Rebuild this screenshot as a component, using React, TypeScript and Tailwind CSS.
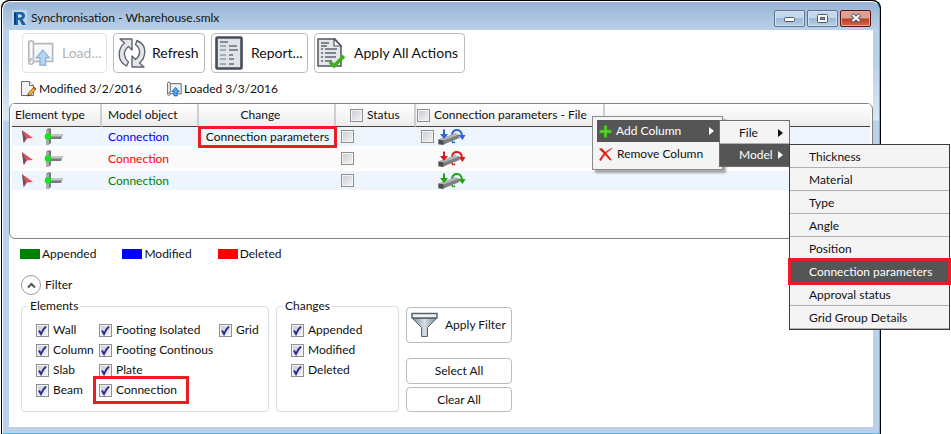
import React, { useId, useState } from "react";

function ScrollIcon({ size, faded }: { size: number; faded?: boolean }) {
  return (
    <svg width={size} height={size} viewBox="0 0 30 30" className={`shrink-0 ${faded ? "opacity-45" : ""}`} aria-hidden="true">
      <path d="M8 5H28.500V24H5" fill="#eef0f2" stroke="#5d6268" strokeWidth="1.8" />
      <path d="M3 25V4Q3 2 5.500 2Q8 2 8 4V21" fill="#f8f8f8" stroke="#5d6268" strokeWidth="1.8" />
      <path d="M3 25Q3 27 5 27Q8 27 8 24Q8 21 5.500 21.500Q4 22 5 24.500" fill="#fff" stroke="#5d6268" strokeWidth="1.6" />
      <path d="M18 12L25 20H21V28H15V20H11Z" fill="#5ba8f0" stroke="#1762b3" strokeWidth="1.6" />
    </svg>
  );
}

function RefreshIcon() {
  return (
    <svg width="28" height="32" viewBox="0 0 28 32" className="shrink-0" aria-hidden="true">
      <g fill="#e3e6e9" stroke="#60656d" strokeWidth="1.4" strokeLinejoin="round">
        <path d="M2 2H14V13L10.500 9.500Q6 13 6.500 18Q7 22 10.500 25L8.500 29Q1 25 1.200 17Q1.500 10 6.500 6Z" />
        <path d="M26 30H14V19L17.500 22.500Q22 19 21.500 14Q21 10 17.500 7.500L19 3.500Q27 7 26.800 15Q26.500 22 21.500 26Z" />
      </g>
    </svg>
  );
}

function ReportIcon() {
  return (
    <svg width="28" height="34" viewBox="0 0 28 34" className="shrink-0" aria-hidden="true">
      <rect x="1.500" y="1.500" width="25" height="31" rx="1" fill="#dfe3e8" stroke="#454d5a" strokeWidth="2.600" />
      <path d="M5 6H13M14 10H22M14 14H23M14 19H18M14 23H19M14 28H19" stroke="#858c96" strokeWidth="2" />
      <path d="M5 10H11M5 14H11M5 19H11M5 23H11M5 28H11" stroke="#a5abb3" strokeWidth="2" />
    </svg>
  );
}

function ApplyActionsIcon() {
  return (
    <svg width="30" height="32" viewBox="0 0 30 32" className="shrink-0" aria-hidden="true">
      <path d="M2 2H19L25 9V29H2Z" fill="#e4e7ea" stroke="#4f5661" strokeWidth="1.500" />
      <path d="M18 2V9H25Z" fill="#fff" stroke="#4f5661" strokeWidth="1.200" />
      <path d="M5 6H13M5 9H11M9 12H21M9 16H20M9 20H20M9 24H16" stroke="#5c636d" strokeWidth="1.300" />
      <path d="M5 12H7M5 16H7M5 20H7M5 24H7" stroke="#5c636d" strokeWidth="1.500" />
      <path d="M14 25L18 29L28 19" fill="none" stroke="#3fae1c" strokeWidth="3.600" />
    </svg>
  );
}

function EditIcon() {
  return (
    <svg width="16" height="16" viewBox="0 0 16 16" className="shrink-0" aria-hidden="true">
      <path d="M.5 .5H8.500L12.500 4.500V14.500H.5Z" fill="#f4f4f4" stroke="#6a6a6a" />
      <path d="M8.500 .5V4.500H12.500" fill="#fff" stroke="#6a6a6a" />
      <path d="M6.500 15L7.500 12L13 6L15 8L9.500 14Z" fill="#f5b32c" stroke="#7d5210" strokeWidth=".8" />
      <path d="M12 7L13.200 5.700L15.400 7.900L14 9Z" fill="#d03a2a" />
      <path d="M6.500 15.500L7.200 13L8.600 14.300Z" fill="#333" />
    </svg>
  );
}

function FunnelIcon() {
  return (
    <svg width="27" height="26" viewBox="0 0 27 26" className="shrink-0" aria-hidden="true">
      <defs>
        <linearGradient id="funnel" x1="0" x2="1">
          <stop offset="0" stopColor="#7d8b96" />
          <stop offset=".5" stopColor="#d5dde2" />
          <stop offset="1" stopColor="#7d8b96" />
        </linearGradient>
      </defs>
      <path d="M1 6L10.500 15.500V24.500H16.500V15.500L26 6Z" fill="url(#funnel)" stroke="#56616b" />
      <path d="M1 1.500H26V6H1Z" fill="#eef3f4" stroke="#56616b" strokeWidth="1.400" />
    </svg>
  );
}

function LogoIcon() {
  return (
    <svg width="15" height="16" viewBox="0 0 15 16" className="shrink-0" aria-hidden="true">
      <rect width="15" height="16" fill="#c3d4e8" />
      <path d="M2 2H9.500Q13 2.500 13 6Q13 8.500 10.500 9.500L14 15H10L7.500 10H6V15H2Z" fill="#1b62ad" />
      <path d="M6 4.500H8.500Q9.800 4.800 9.800 6Q9.800 7.400 8.500 7.600H6Z" fill="#cfe0f1" />
      <path d="M2 2L4 3.500V13.500L2 15Z" fill="#0b3f7c" />
    </svg>
  );
}

function PointerIcon() {
  return (
    <svg width="12" height="15" viewBox="0 0 12 15" aria-hidden="true">
      <path d="M0 1L11 9L5 9.500L2 14Z" fill="#d9535f" />
      <path d="M0 1L1.500 14L4 9.500Z" fill="#6b5058" />
    </svg>
  );
}

function JointIcon() {
  return (
    <svg width="20" height="17" viewBox="0 0 20 17" aria-hidden="true">
      <path d="M2 2L4 0.500H7V15L5 16.500H2Z" fill="#77797c" />
      <path d="M2 2H5V16.500H2Z" fill="#a9abae" />
      <path d="M7 6H19L17 11H7Z" fill="#77797c" />
      <path d="M7 6H19L18 8.500H7Z" fill="#c3c5c7" />
      <circle cx="4" cy="8.500" r="3.300" fill="#12e51c" />
    </svg>
  );
}

function ForceIcon({ color }: { color: string }) {
  return (
    <svg width="28" height="18" viewBox="0 0 28 18" aria-hidden="true">
      <path d="M14 7Q14.500 2 19 2Q23.500 2 24 8" fill="none" stroke={color} strokeWidth="2" />
      <path d="M17 14Q13 16 14.500 11" fill="none" stroke={color} strokeWidth="1.400" />
      <path d="M.5 11.500L17 5.500L21.500 6.500V10L5.500 16.500H.5Z" fill="#7d7f82" />
      <path d="M.5 11.500L17 5.500L21.500 6.500L5.500 12.500Z" fill="#b4b6b8" />
      <path d="M.5 11.500L5.500 12.500V17L.5 16Z" fill="#4c4f52" />
      <path d="M5 1.500H7V6H10L6 11L2 6H5Z" fill={color} />
      <path d="M20.500 7H27.500L24.500 12Z" fill={color} />
    </svg>
  );
}

function PlusIcon() {
  return (
    <svg width="13" height="13" viewBox="0 0 13 13" className="shrink-0" aria-hidden="true">
      <path d="M5 0.500H8V5H12.500V8H8V12.500H5V8H.5V5H5Z" fill="#5ad42d" stroke="#2c9a16" strokeWidth=".8" />
    </svg>
  );
}

function CrossIcon() {
  return (
    <svg width="14" height="13" viewBox="0 0 14 13" className="shrink-0" aria-hidden="true">
      <path d="M0 1L2.500 0Q7 4 13 12.500L10.500 12Q6 6.500 0 1Z" fill="#dd2418" />
      <path d="M13.500 0Q6 4.500 2 12.500L.5 12Q4 4 13.500 0Z" fill="#dd2418" stroke="#dd2418" strokeWidth=".6" />
    </svg>
  );
}

function Arrow() {
  return (
    <svg width="5" height="8" viewBox="0 0 5 8" className="shrink-0" aria-hidden="true">
      <path d="M0 0L5 4L0 8Z" fill="currentColor" />
    </svg>
  );
}

function CheckBox({ id, checked = false, label }: { id?: string; checked?: boolean; label?: string }) {
  const [on, setOn] = useState(checked);
  return (
    <span className="inline-grid size-[13px] shrink-0 align-middle">
      <input
        id={id}
        type="checkbox"
        aria-label={label}
        checked={on}
        onChange={() => setOn(!on)}
        className="col-start-1 row-start-1 size-[13px] appearance-none border border-[#8e8f8f] bg-linear-to-br from-[#c6cad1] to-[#f6f6f6] shadow-[inset_0_0_0_1px_#f4f4f4]"
      />
      {on && (
        <svg width="13" height="13" viewBox="0 0 13 13" className="pointer-events-none col-start-1 row-start-1" aria-hidden="true">
          <path d="M3 6.500L5 10Q7 5 10 2.500" fill="none" stroke="#2b2f8f" strokeWidth="2" />
        </svg>
      )}
    </span>
  );
}

function LabelledCheck({ text, highlight }: { text: string; highlight?: boolean }) {
  const id = useId();
  return (
    <div className={`flex h-4 w-max items-center gap-1 ${highlight ? "pr-1.5 outline-3 outline-offset-3 outline-[#ed1c24]" : ""}`}>
      <CheckBox id={id} checked />
      <label htmlFor={id}>{text}</label>
    </div>
  );
}

const btn = "flex items-center rounded border border-[#bcbcbc] bg-white whitespace-nowrap";

const rows = [
  { tone: "text-[#0000ff]", bg: "bg-[#eef5fd]", color: "#2f63d6", change: "Connection parameters" },
  { tone: "text-[#ff0000]", bg: "bg-[#fafafa]", color: "#d81a1a", change: "" },
  { tone: "text-[#008000]", bg: "bg-[#eef5fd]", color: "#1fa30f", change: "" },
];

const elements = [
  ["Wall", "Column", "Slab", "Beam"],
  ["Footing Isolated", "Footing Continous", "Plate", "Connection"],
  ["Grid"],
];

const modelItems = [
  "Thickness",
  "Material",
  "Type",
  "Angle",
  "Position",
  "Connection parameters",
  "Approval status",
  "Grid Group Details",
];

function TitleBar() {
  const control = "grid h-[17px] w-[31px] place-items-center rounded-xs border";
  const plain = "border-[#5f7391] bg-[linear-gradient(#c4d8ec_50%,#9db9d8_50%,#b5cfe9)] shadow-[inset_0_0_0_1px_#d3e2f2]";
  return (
    <header className="flex h-7 items-center gap-1 pt-1 pr-2 pl-[9px]">
      <LogoIcon />
      <h1 className="flex-1">Synchronisation - Wharehouse.smlx</h1>
      <div className="flex gap-0.5">
        <button type="button" aria-label="Minimise" className={`${control} ${plain}`}>
          <svg width="11" height="11" viewBox="0 0 11 11">
            <rect x=".5" y="4.500" width="10" height="4" rx="1" fill="#fff" stroke="#535666" />
          </svg>
        </button>
        <button type="button" aria-label="Maximise" className={`${control} ${plain}`}>
          <svg width="11" height="9" viewBox="0 0 11 9">
            <rect x=".5" y=".5" width="10" height="8" rx="1" fill="#fff" stroke="#535666" />
            <rect x="3.500" y="3.500" width="4" height="2" fill="#7e9fc4" stroke="#535666" />
          </svg>
        </button>
        <button
          type="button"
          aria-label="Close"
          className={`${control} border-[#5a1410] bg-[linear-gradient(#dfa096_48%,#bd3a22_52%,#cf6a50)] shadow-[inset_0_0_0_1px_#e0a79e]`}
        >
          <svg width="12" height="10" viewBox="0 0 12 10">
            <path d="M2 1.500L10 8.500M10 1.500L2 8.500" stroke="#535666" strokeWidth="4" />
            <path d="M2.500 2L9.500 8M9.500 2L2.500 8" stroke="#fff" strokeWidth="2.200" />
          </svg>
        </button>
      </div>
    </header>
  );
}

function Toolbar() {
  return (
    <div className="flex gap-1.5 pt-[3px] pl-[13px] text-[14px]">
      <button type="button" disabled className="flex h-10 w-[85px] items-center gap-2 rounded border border-[#e2e2e2] pl-[3px] text-[#b4b4b4]">
        <ScrollIcon size={28} faded />
        Load...
      </button>
      <button type="button" className={`${btn} h-10 w-[92px] gap-1.5 pl-1`}>
        <RefreshIcon />
        Refresh
      </button>
      <button type="button" className={`${btn} h-10 w-[97px] gap-2 pl-[3px]`}>
        <ReportIcon />
        Report...
      </button>
      <button type="button" className={`${btn} h-10 w-[151px] gap-2 pl-px`}>
        <ApplyActionsIcon />
        Apply All Actions
      </button>
    </div>
  );
}

function SyncTable() {
  const head = "border-r-2 border-r-[#cfcfcf] font-normal whitespace-nowrap";
  return (
    <section className="h-[136px] rounded-md border border-[#828282] px-0.5">
      <table className="w-full table-fixed border-separate border-spacing-0">
        <colgroup>
          <col className="w-[90px]" />
          <col className="w-[97px]" />
          <col className="w-[137px]" />
          <col className="w-20" />
          <col className="w-[189px]" />
          <col />
        </colgroup>
        <thead>
          <tr className="h-[23px] bg-linear-to-b from-white to-[#ececec] text-left *:border-b *:border-b-[#454545]">
            <th className={`${head} pl-[3px]`}>Element type</th>
            <th className={`${head} pl-1.5`}>Model object</th>
            <th className={`${head} pr-3 text-center`}>Change</th>
            <th className={`${head} pl-3.5`}>
              <span className="flex items-center gap-1">
                <CheckBox label="Status, all rows" />
                Status
              </span>
            </th>
            <th className={`${head} pl-px`}>
              <span className="flex items-center gap-1">
                <CheckBox label="Connection parameters, all rows" />
                Connection parameters - File
              </span>
            </th>
            <th aria-label="Spare" />
          </tr>
        </thead>
        <tbody>
          {rows.map((r) => (
            <tr key={r.tone} className={`h-[22px] *:border-b-3 *:border-white ${r.bg}`}>
              <td>
                <span className="flex items-center gap-2.5 pl-2.5">
                  <PointerIcon />
                  <JointIcon />
                </span>
              </td>
              <td className={`pl-1.5 ${r.tone}`}>Connection</td>
              <td className="p-0">
                {r.change && (
                  <div className="mx-0.5 flex h-4 items-center justify-center whitespace-nowrap outline-3 outline-[#ed1c24]">
                    {r.change}
                  </div>
                )}
              </td>
              <td className="pl-[5px] leading-none">
                <CheckBox label="Status" />
              </td>
              <td>
                <span className="flex items-center gap-1 pl-[5px]">
                  {r.change ? <CheckBox label="Connection parameters" /> : <span className="w-[13px]" />}
                  <ForceIcon color={r.color} />
                </span>
              </td>
              <td />
            </tr>
          ))}
        </tbody>
      </table>
    </section>
  );
}

function ColorKey() {
  const swatch = "h-2.5 w-5";
  return (
    <ul className="flex gap-[26px] pt-[7px] pl-[11px]">
      <li className="flex items-center gap-0.5">
        <span className={`${swatch} bg-[#008000]`} />
        Appended
      </li>
      <li className="flex items-center gap-0.5">
        <span className={`${swatch} bg-[#0000ff]`} />
        Modified
      </li>
      <li className="flex items-center gap-0.5">
        <span className={`${swatch} bg-[#ff0000]`} />
        Deleted
      </li>
    </ul>
  );
}

function FilterPanel() {
  return (
    <section>
      <div className="flex items-center gap-1 pt-[13px] pl-3">
        <button type="button" aria-expanded="true" aria-label="Collapse filter" className="grid size-5 place-items-center rounded-full border border-[#9a9a9a]">
          <svg width="9" height="7" viewBox="0 0 9 7">
            <path d="M1 5.500L4.500 2L8 5.500" fill="none" stroke="#555" strokeWidth="2" />
          </svg>
        </button>
        <h2>Filter</h2>
      </div>
      <div className="flex items-end gap-[7px] pt-[3px] pl-3">
        <fieldset className="h-[114px] w-[248px] rounded border border-[#d5dfe8] pl-3.5">
          <legend className="-ml-2 px-0.5 leading-4">Elements</legend>
          <div className="grid grid-cols-[63px_120px_1fr] pt-2">
            {elements.map((group) => (
              <div key={group[0]} className="flex flex-col gap-1">
                {group.map((name) => (
                  <LabelledCheck key={name} text={name} highlight={name === "Connection"} />
                ))}
              </div>
            ))}
          </div>
        </fieldset>
        <fieldset className="h-[114px] w-[123px] rounded border border-[#d5dfe8] pl-3.5">
          <legend className="-ml-2 px-0.5 leading-4">Changes</legend>
          <div className="flex flex-col gap-1 pt-2">
            <LabelledCheck text="Appended" />
            <LabelledCheck text="Modified" />
            <LabelledCheck text="Deleted" />
          </div>
        </fieldset>
        <div className="flex w-[106px] flex-col">
          <button type="button" className={`${btn} h-9 gap-[7px] pl-1`}>
            <FunnelIcon />
            Apply Filter
          </button>
          <button type="button" className={`${btn} mt-[15px] h-[26px] justify-center`}>
            Select All
          </button>
          <button type="button" className={`${btn} mt-[3px] h-[25px] justify-center`}>
            Clear All
          </button>
        </div>
      </div>
    </section>
  );
}

function ColumnMenu() {
  const item = "flex w-full items-center";
  return (
    <div className="absolute top-[116px] left-[592px] w-[131px] border border-[#8a8a8a] bg-[#f4f4f4] py-[3px] pl-1 shadow-[3px_3px_2px_#00000055]" role="menu">
      <button type="button" role="menuitem" className={`${item} h-[22px] gap-1 bg-[#555] pr-2 pl-0.5 text-white`}>
        <PlusIcon />
        <span className="flex-1 text-left">Add Column</span>
        <Arrow />
      </button>
      <button type="button" role="menuitem" className={`${item} h-6 gap-1 pl-0.5`}>
        <CrossIcon />
        Remove Column
      </button>
      <div className="absolute top-[3px] left-[126px] w-[71px] border border-[#6e6e6e] bg-[#f4f4f4]" role="menu">
        <button type="button" role="menuitem" className={`${item} h-[23px] justify-between border-b border-[#b0b0b0] pt-0.5 pr-1.5 pl-[19px]`}>
          File
          <Arrow />
        </button>
        <button type="button" role="menuitem" className={`${item} h-[22px] justify-between bg-[#555] pr-1.5 pl-[19px] text-white`}>
          Model
          <Arrow />
        </button>
        <div className="absolute top-[23px] left-[69px] w-[161px] border border-[#3c3c3c] bg-[#f4f4f4]" role="menu">
          {modelItems.map((name) => (
            <button
              key={name}
              type="button"
              role="menuitem"
              className={`${item} h-[23px] border-b pt-0.5 pl-[19px] ${
                name === "Connection parameters"
                  ? "relative border-[#555] bg-[#555] text-white outline-3 -outline-offset-1 outline-[#ed1c24]"
                  : "border-[#b0b0b0]"
              }`}
            >
              {name}
            </button>
          ))}
        </div>
      </div>
    </div>
  );
}

export default function App() {
  return (
    <div className="relative bg-white font-['Lato','Open_Sans',sans-serif] text-[12px] leading-4 text-[#111]">
      <main className="mr-[70px] ml-px overflow-hidden rounded-t-lg border border-b-0 border-black bg-black">
        <div className="rounded-t-lg border border-t-white border-r-[#3fc4dc] border-b-[#3fc4dc] border-l-white bg-[linear-gradient(#98b3d3,#b9d1ea_28px,#b9d1ea_60px,#dbe8f6_118px,#b9d1ea_119px)]">
          <TitleBar />
          <div className="mr-1.5 mb-1.5 ml-1.5 bg-white pb-[15px]">
            <Toolbar />
            <div className="flex gap-6 pt-2 pb-1.5 pl-3">
              <span className="flex items-center gap-0.5">
                <EditIcon />
                Modified 3/2/2016
              </span>
              <span className="flex items-center gap-0.5">
                <ScrollIcon size={16} />
                Loaded 3/3/2016
              </span>
            </div>
            <SyncTable />
            <ColorKey />
            <FilterPanel />
          </div>
        </div>
      </main>
      <ColumnMenu />
    </div>
  );
}
